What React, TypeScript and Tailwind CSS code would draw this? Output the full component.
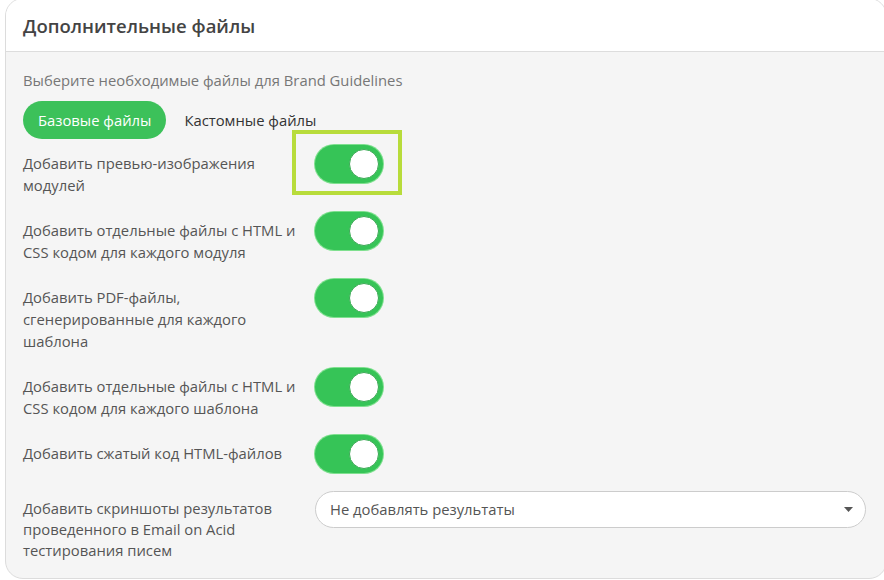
import * as React from "react"

const rows = [
  { label: "Добавить превью-изображения модулей", highlight: true },
  { label: "Добавить отдельные файлы с HTML и CSS кодом для каждого модуля" },
  { label: "Добавить PDF-файлы, сгенерированные для каждого шаблона" },
  { label: "Добавить отдельные файлы с HTML и CSS кодом для каждого шаблона" },
  { label: "Добавить сжатый код HTML-файлов" },
]

function Toggle({ highlight }: { highlight?: boolean }) {
  return (
    <div className="relative h-[38px] w-[68px] shrink-0">
      <div className="flex h-full w-full items-center justify-end rounded-full bg-[#36c457] pr-[4px] shadow-[0_0_0_1px_#7fe08f]">
        <div className="h-[30px] w-[30px] rounded-full border border-[#3aa954] bg-white" />
      </div>
      {highlight && (
        <div className="absolute -left-[23px] -top-[15px] h-[65px] w-[110px] border-[4px] border-[#b8dc3b]" />
      )}
    </div>
  )
}

export default function App() {
  return (
    <div className="min-h-[580px] bg-white font-['Open_Sans',sans-serif]">
      <div className="-mt-[2px] ml-[5px] w-[882px] overflow-hidden rounded-[18px] border border-[#dcdcdc] bg-[#f5f5f5]">
        <div className="flex h-[53px] items-center border-b border-[#dddddd] bg-white px-[17px] pt-[1px]">
          <h2 className="text-[18.5px] font-semibold text-[#444]">Дополнительные файлы</h2>
        </div>
        <div className="pb-[17px] pl-[17px] pr-[20px] pt-[17px]">
          <p className="text-[14.8px] leading-[22px] text-[#777]">Выберите необходимые файлы для Brand Guidelines</p>
          <div className="mt-[10px] flex items-center gap-[18px]">
            <button className="h-[38px] rounded-full bg-[#3cc15a] px-[15px] text-[14.8px] text-white">Базовые файлы</button>
            <span className="text-[14.8px] text-[#333]">Кастомные файлы</span>
          </div>
          <div className="mt-[6px] flex flex-col gap-[16px]">
            {rows.map((r, i) => (
              <div key={i} className="grid grid-cols-[292px_1fr] items-start">
                <div className="pr-[12px] pt-[7px] text-[14.8px] leading-[22px] text-[#555]">{r.label}</div>
                <Toggle highlight={r.highlight} />
              </div>
            ))}
            <div className="mt-[2px] grid grid-cols-[292px_1fr] items-start">
              <div className="pr-[12px] pt-[7px] text-[14.8px] leading-[21px] text-[#555]">
                Добавить скриншоты результатов проведенного в Email on Acid тестирования писем
              </div>
              <div className="flex h-[37px] items-center justify-between rounded-full border border-[#cccccc] bg-white pl-[14px] pr-[12px]">
                <span className="text-[14.8px] text-[#555]">Не добавлять результаты</span>
                <svg width="9" height="5" viewBox="0 0 9 5"><path d="M0 0h9L4.5 5z" fill="#555" /></svg>
              </div>
            </div>
          </div>
        </div>
      </div>
    </div>
  )
}
